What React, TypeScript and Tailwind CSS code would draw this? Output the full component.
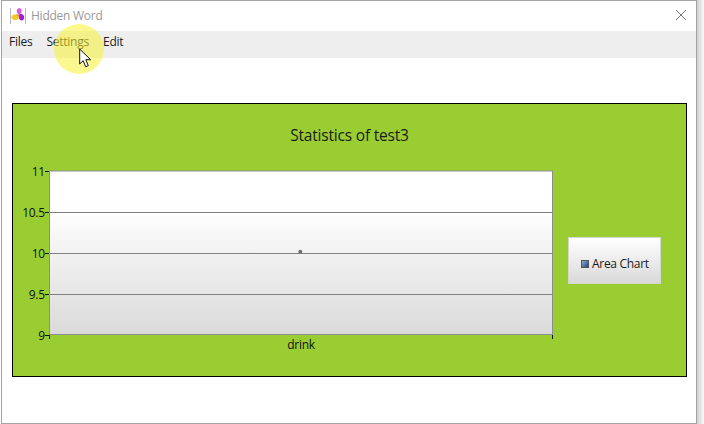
const GRID = [
  { label: "11", y: 171 },
  { label: "10.5", y: 212 },
  { label: "10", y: 253 },
  { label: "9.5", y: 294 },
  { label: "9", y: 335 },
];

function AppIcon() {
  return (
    <svg width="18" height="18" viewBox="0 0 18 18" className="shrink-0">
      <path d="M1.5 1V17M16.5 1V17" stroke="#b9b5bc" strokeWidth="1" />
      <path d="M8 2.500C9 .5 12.500 .8 12.600 3C13 5 12 7 10 7.500C8 7 7.500 4.500 8 2.500Z" fill="#d65be6" />
      <path d="M10.500 7C12.500 6 15 8 15.200 10C15.200 12.500 14 14 12 13.500C10 12.500 9 10 10.500 7Z" fill="#a81bd2" />
      <path d="M2.500 9.500C3.500 7 8 6.500 10 8.500C10.800 11 9 13.200 6 13C3.800 13.300 2.300 11.800 2.500 9.500Z" fill="#f0c92c" />
      <path d="M7.500 7.500L9.500 7L10 9L8.500 9.500Z" fill="#e08a78" />
    </svg>
  );
}

function Plot() {
  return (
    <svg width="548" height="192" viewBox="13 163 548 192" className="block shrink-0 tracking-[-0.3px]">
      <defs>
        <linearGradient id="plotFill" x1="0" y1="0" x2="0" y2="1">
          <stop offset="0" stopColor="#ffffff" />
          <stop offset="0.25" stopColor="#fefefe" />
          <stop offset="1" stopColor="#dadada" />
        </linearGradient>
      </defs>
      <rect x="49.5" y="171" width="503" height="163.500" fill="url(#plotFill)" stroke="#8c8c8c" />
      {GRID.slice(1, 4).map((g) => (
        <rect key={g.label} x="50" y={g.y} width="502" height="1" fill="#808080" />
      ))}
      {GRID.map((g) => (
        <g key={g.label}>
          <rect x="45" y={g.y} width="4" height="1" fill="#111" />
          <text x="44.8" y={g.y + 5} textAnchor="end" fontSize="12" fill="#111">
            {g.label}
          </text>
        </g>
      ))}
      <rect x="49" y="335" width="1" height="4" fill="#111" />
      <rect x="552" y="335" width="1" height="4" fill="#111" />
      <circle cx="300.3" cy="251.700" r="2" fill="#707070" />
      <text x="301" y="348.500" textAnchor="middle" fontSize="12" fill="#111">
        drink
      </text>
    </svg>
  );
}

function Pointer() {
  return (
    <div className="pointer-events-none absolute left-[54px] top-[24px] h-[50px] w-[50px] rounded-full bg-[#f5f232]/55">
      <svg width="14" height="21" viewBox="0 0 14 21" className="absolute left-[25px] top-[24px]">
        <path d="M.7 1V16L4.200 12.700L6.700 18.800L9.300 17.700L6.800 11.700H11.600Z" fill="#fff" stroke="#111" strokeWidth="1" />
      </svg>
    </div>
  );
}

export default function App() {
  return (
    <div className="relative flex h-[424px] w-[704px] overflow-hidden bg-[#fefefe] pl-px font-['Open_Sans','Noto_Sans',sans-serif] text-[12px] text-[#1a1a1a]">
      <div className="flex w-[696px] flex-col border border-[#a5a5a5] bg-white">
        <header className="flex h-[30px] shrink-0 items-center pl-[7px] pr-[9px] text-[#999]">
          <AppIcon />
          <span className="ml-1 flex-1 leading-4 tracking-[-0.25px]">Hidden Word</span>
          <svg width="12" height="12" viewBox="0 0 12 12" className="mb-0.5">
            <path d="M1 1L11 11M11 1L1 11" stroke="#777" fill="none" />
          </svg>
        </header>
        <nav className="flex h-[27px] shrink-0 gap-[14px] bg-[#eeeeee] pl-[7px] pt-[3px] leading-4 tracking-[-0.25px]">
          <span>Files</span>
          <span>Settings</span>
          <span>Edit</span>
        </nav>
        <main className="px-[10px] pt-[45px]">
          <section className="h-[274px] w-[675px] border border-black bg-[#9acd32]">
            <h1 className="flex h-[59px] justify-center pt-[19px] text-[15.5px] leading-6 tracking-[-0.2px]">Statistics of test3</h1>
            <div className="flex items-start">
              <Plot />
              <div className="ml-[7px] mt-[74px] flex h-[47px] w-[93px] items-center gap-[3px] border border-[#d4d8cc] bg-linear-to-b from-white to-[#d9d9d9] pl-3 pt-[6px]">
                <span className="h-2 w-2 border border-[#50555c] bg-linear-to-br from-[#8cb0d5] to-[#28476e]" />
                <span className="whitespace-nowrap pt-px tracking-[-0.3px]">Area Chart</span>
              </div>
            </div>
          </section>
        </main>
      </div>
      <div className="w-[7px] bg-linear-to-r from-[#cfcfcf] to-[#fafafa]" />
      <Pointer />
    </div>
  );
}
